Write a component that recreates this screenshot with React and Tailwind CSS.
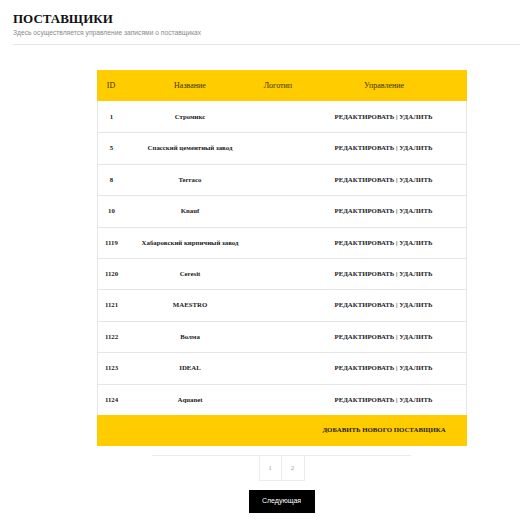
import React from "react";

const rows = [
  ["1", "Стромикс"],
  ["5", "Спасский цементный завод"],
  ["8", "Terraco"],
  ["10", "Knauf"],
  ["1119", "Хабаровский кирпичный завод"],
  ["1120", "Ceresit"],
  ["1121", "MAESTRO"],
  ["1122", "Волма"],
  ["1123", "IDEAL"],
  ["1124", "Aquanet"],
];

const serif = { fontFamily: '"Liberation Serif", "Times New Roman", serif' };
const sans = { fontFamily: '"Liberation Sans", Arial, sans-serif' };

export default function App() {
  return (
    <div className="w-[520px] h-[524px] bg-white overflow-hidden">
      <div className="pl-[13px] pt-[11px]">
        <h1 className="text-[13px] leading-[15px] font-bold text-[#111]" style={serif}>
          ПОСТАВЩИКИ
        </h1>
        <p className="text-[6.7px] leading-[8px] text-[#8a8a8a] mt-[3px]" style={sans}>
          Здесь осуществляется управление записями о поставщиках
        </p>
        <div className="mt-[7px] h-px bg-[#e4e4e4]" />
      </div>

      <div className="mt-[25px] ml-[97px] w-[370px]" style={serif}>
        <div className="grid grid-cols-[28px_130px_46px_1fr] h-[31px] items-center bg-[#ffcc00] text-[8px] text-[#3a3300]">
          <div className="text-center">ID</div>
          <div className="text-center">Название</div>
          <div className="text-center">Логотип</div>
          <div className="text-center">Управление</div>
        </div>
        <div className="border-x border-[#e6e6e6]">
          {rows.map(([id, name], i) => (
            <div
              key={id}
              className={`grid grid-cols-[27px_130px_46px_1fr] h-[31.4px] items-center text-[6.8px] font-bold text-[#222] ${i > 0 ? "border-t border-[#e6e6e6]" : ""}`}
            >
              <div className="text-center">{id}</div>
              <div className="text-center whitespace-nowrap">{name}</div>
              <div />
              <div className="text-center whitespace-nowrap">РЕДАКТИРОВАТЬ | УДАЛИТЬ</div>
            </div>
          ))}
        </div>
        <div className="grid grid-cols-[28px_130px_46px_1fr] h-[31px] items-center bg-[#ffcc00] text-[6.8px] font-bold text-[#222]">
          <div />
          <div />
          <div />
          <div className="text-center whitespace-nowrap">ДОБАВИТЬ НОВОГО ПОСТАВЩИКА</div>
        </div>
      </div>

      <div className="mt-[9px] ml-[152px] w-[259px] border-t border-[#ececec] flex flex-col items-center">
        <div className="flex">
          <div className="w-[23px] h-[25px] border border-t-0 border-[#ececec] flex items-center justify-center text-[7px] text-[#999]" style={serif}>
            1
          </div>
          <div className="w-[23px] h-[25px] border border-t-0 border-l-0 border-[#ececec] flex items-center justify-center text-[7px] text-[#999]" style={serif}>
            2
          </div>
        </div>
        <div className="mt-[9px] w-[66px] h-[23px] bg-black text-white text-[7px] flex items-center justify-center" style={sans}>
          Следующая
        </div>
      </div>
    </div>
  );
}
